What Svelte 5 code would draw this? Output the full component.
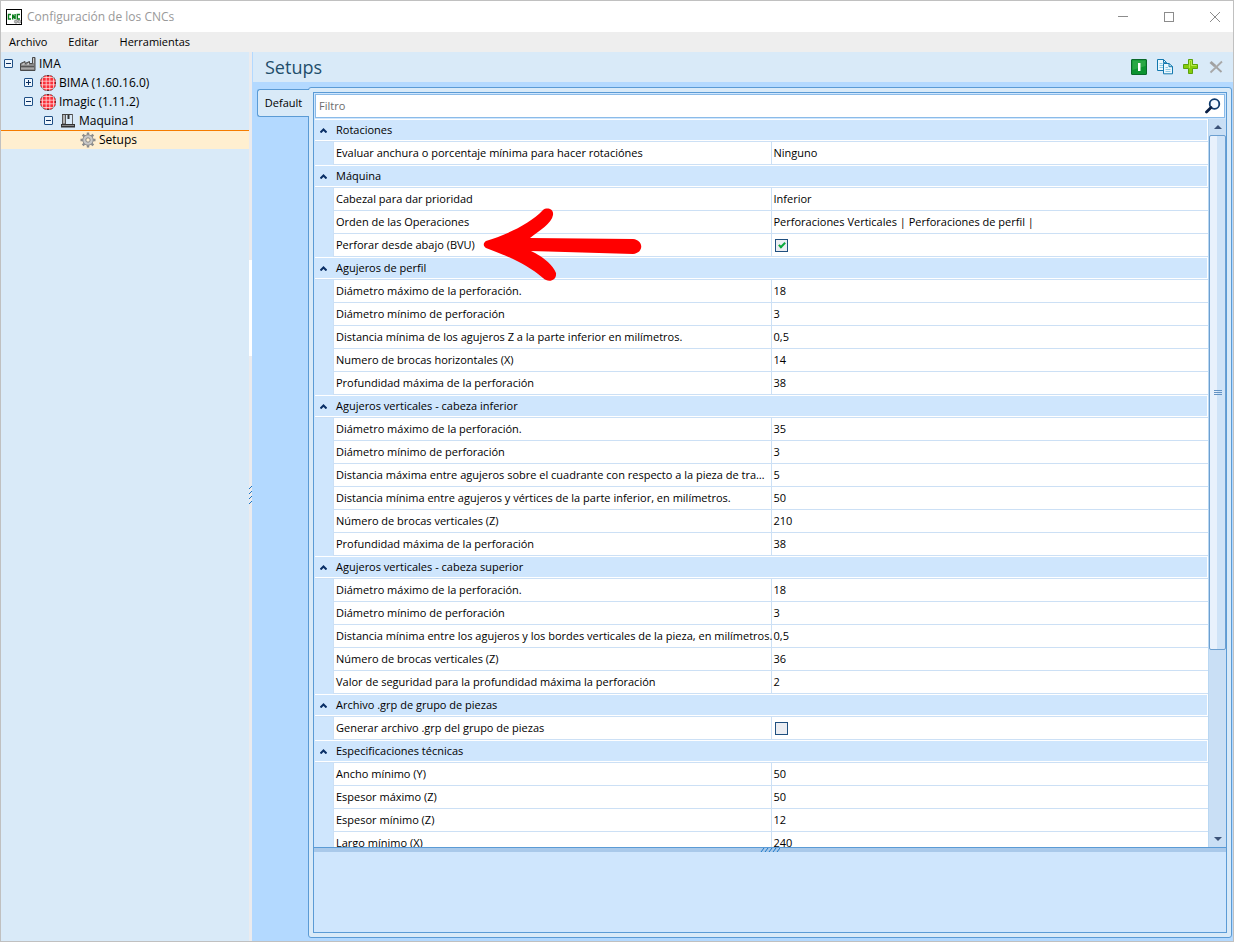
<script>
  const menus = ['Archivo', 'Editar', 'Herramientas'];

  const tree = [
    { label: 'IMA', level: 0, icon: 'factory', open: true },
    { label: 'BIMA (1.60.16.0)', level: 1, icon: 'ima', open: false },
    { label: 'Imagic (1.11.2)', level: 1, icon: 'ima', open: true },
    { label: 'Maquina1', level: 2, icon: 'machine', open: true },
    { label: 'Setups', level: 3, icon: 'gear' }
  ];

  let selected = 'Setups';
  let filter = '';

  let groups = [
    {
      name: 'Rotaciones',
      open: true,
      rows: [{ name: 'Evaluar anchura o porcentaje mínima para hacer rotaciónes', value: 'Ninguno' }]
    },
    {
      name: 'Máquina',
      open: true,
      rows: [
        { name: 'Cabezal para dar prioridad', value: 'Inferior' },
        { name: 'Orden de las Operaciones', value: 'Perforaciones Verticales | Perforaciones de perfil |' },
        { name: 'Perforar desde abajo (BVU)', value: true, marked: true }
      ]
    },
    {
      name: 'Agujeros de perfil',
      open: true,
      rows: [
        { name: 'Diámetro máximo de la perforación.', value: '18' },
        { name: 'Diámetro mínimo de perforación', value: '3' },
        { name: 'Distancia mínima de los agujeros Z a la parte inferior en milímetros.', value: '0,5' },
        { name: 'Numero de brocas horizontales (X)', value: '14' },
        { name: 'Profundidad máxima de la perforación', value: '38' }
      ]
    },
    {
      name: 'Agujeros verticales - cabeza inferior',
      open: true,
      rows: [
        { name: 'Diámetro máximo de la perforación.', value: '35' },
        { name: 'Diámetro mínimo de perforación', value: '3' },
        { name: 'Distancia máxima entre agujeros sobre el cuadrante con respecto a la pieza de trabaj...', value: '5' },
        { name: 'Distancia mínima entre agujeros y vértices de la parte inferior, en milímetros.', value: '50' },
        { name: 'Número de brocas verticales (Z)', value: '210' },
        { name: 'Profundidad máxima de la perforación', value: '38' }
      ]
    },
    {
      name: 'Agujeros verticales - cabeza superior',
      open: true,
      rows: [
        { name: 'Diámetro máximo de la perforación.', value: '18' },
        { name: 'Diámetro mínimo de perforación', value: '3' },
        { name: 'Distancia mínima entre los agujeros y los bordes verticales de la pieza, en milímetros.', value: '0,5' },
        { name: 'Número de brocas verticales (Z)', value: '36' },
        { name: 'Valor de seguridad para la profundidad máxima la perforación', value: '2' }
      ]
    },
    {
      name: 'Archivo .grp de grupo de piezas',
      open: true,
      rows: [{ name: 'Generar archivo .grp del grupo de piezas', value: false }]
    },
    {
      name: 'Especificaciones técnicas',
      open: true,
      rows: [
        { name: 'Ancho mínimo (Y)', value: '50' },
        { name: 'Espesor máximo (Z)', value: '50' },
        { name: 'Espesor mínimo (Z)', value: '12' },
        { name: 'Largo mínimo (X)', value: '240' }
      ]
    }
  ];

  $: visible = groups
    .map((group) => ({
      ...group,
      rows: group.rows.filter((row) => row.name.toLowerCase().includes(filter.toLowerCase()))
    }))
    .filter((group) => group.rows.length > 0);

  function toggle(name) {
    groups = groups.map((g) => (g.name === name ? { ...g, open: !g.open } : g));
  }
</script>

<div class="window">
  <header class="titlebar">
    <svg class="app-icon" width="16" height="16" viewBox="0 0 16 16">
      <rect x="0.5" y="0.5" width="15" height="15" fill="#fff" stroke="#000" />
      <g fill="none" stroke="#0a7d1c" stroke-width="1.4">
        <path d="M5 5.5H2.500v4.500H5" />
        <path d="M6.700 10.600V5.500l2.400 4.500V5" />
        <path d="M14 5.500h-2.700v4.500H14" />
      </g>
      <circle cx="10" cy="12.6" r="1.6" fill="#bbb" stroke="#888" stroke-width="0.8" />
      <circle cx="13.4" cy="12.6" r="1.4" fill="#ccc" stroke="#777" stroke-width="0.8" />
    </svg>
    <h1>Configuración de los CNCs</h1>
    <div class="window-buttons">
      <button type="button" aria-label="Minimizar">
        <svg width="10" height="10" viewBox="0 0 10 10"><path d="M0 4.5h10" /></svg>
      </button>
      <button type="button" aria-label="Maximizar">
        <svg width="10" height="10" viewBox="0 0 10 10"><rect x="0.5" y="0.5" width="9" height="9" /></svg>
      </button>
      <button type="button" aria-label="Cerrar">
        <svg width="10" height="10" viewBox="0 0 10 10"><path d="M0 0l10 10M10 0L0 10" /></svg>
      </button>
    </div>
  </header>

  <nav class="menubar">
    {#each menus as menu}
      <button type="button">{menu}</button>
    {/each}
  </nav>

  <div class="workspace">
    <aside class="sidebar">
      <ul class="tree">
        {#each tree as node}
          <li class="level-{node.level}" class:selected={selected === node.label}>
            {#if node.open !== undefined}
              <svg class="expander" width="9" height="9" viewBox="0 0 9 9">
                <rect x="0.5" y="0.5" width="8" height="8" rx="0.5" fill="#eef6fd" stroke="#1f4f85" />
                <path d={node.open ? 'M2 4.5h5' : 'M2 4.5h5M4.5 2v5'} stroke="#0b2f60" />
              </svg>
            {:else}
              <span class="expander"></span>
            {/if}
            <button type="button" on:click={() => (selected = node.label)}>
              <svg width="16" height="16" viewBox="0 0 16 16">
                {#if node.icon === 'factory'}
                  <path d="M0.5 14.5V7.5L5 5.5v2L9.500 5.500v2h3V1.500h2.500v13z" fill="#8a8a8a" stroke="#4a4a4a" />
                  <path d="M1.500 8.500L4.500 7v1.500zM6.500 8.500L9 7v1.500z" fill="#eee" />
                  <path d="M1 10.500h13" stroke="#555" />
                  <path d="M1 12.500h13" stroke="#a8a8a8" />
                  <path d="M13.500 2v5" stroke="#ccc" />
                {:else if node.icon === 'ima'}
                  <circle cx="8" cy="8" r="8" fill="#1c1c1c" />
                  <path d="M4 0.700h8v2.300h1v1h2.300v8H13v1h-1v2.300H4V13H3v-1H0.700V4H3V3h1z" fill="#f9303a" />
                  <path
                    d="M2.500 2.500v11M6.200 0.200v15.600M9.800 0.200v15.600M13.500 2.500v11M2.500 2.500h11M0.200 6.200h15.600M0.200 9.800h15.600M2.500 13.500h11"
                    stroke="#ffdcdc"
                    stroke-width="0.800"
                  />
                {:else if node.icon === 'machine'}
                  <path d="M2.500 1.500h3v9.500h-3z" fill="#b5b5b5" stroke="#555" />
                  <path d="M2 1.500h11" stroke="#444" />
                  <path d="M8.500 2v4" stroke="#333" stroke-width="2" />
                  <path d="M12.500 1v10" stroke="#666" />
                  <rect x="1" y="11" width="14" height="3.500" fill="#333" />
                  <path d="M2 12.500h12" stroke="#888" />
                {:else}
                  <path d="M8 0.500v15M0.500 8h15M2.700 2.700l10.600 10.600M13.300 2.700L2.700 13.300" stroke="#8b8b8b" stroke-width="2.400" />
                  <circle cx="8" cy="8" r="5.200" fill="#c9c9c9" stroke="#929292" />
                  <circle cx="8" cy="8" r="2.200" fill="#fff0d2" stroke="#888" />
                {/if}
              </svg>
              <span>{node.label}</span>
            </button>
          </li>
        {/each}
      </ul>
    </aside>

    <div class="splitter">
      <svg width="3" height="21" viewBox="0 0 3 21">
        <path d="M0 3l3-3M0 8l3-3M0 13l3-3M0 18l3-3" stroke="#1a78c8" />
      </svg>
    </div>

    <main class="main">
      <div class="heading">
        <h2>Setups</h2>
        <div class="tools">
          <button type="button" aria-label="Activar">
            <svg width="16" height="16" viewBox="0 0 16 16">
              <rect x="0.5" y="0.5" width="15" height="15" rx="0.5" fill="#0c9430" stroke="#0a6a2a" />
              <path d="M1.500 1.500h13v5.500L1.500 11z" fill="#2aa845" />
              <rect x="7" y="4" width="2.500" height="8" fill="#fff" />
            </svg>
          </button>
          <button type="button" aria-label="Copiar">
            <svg width="16" height="16" viewBox="0 0 16 16">
              <path d="M0.500 0.500h6l3 3v8h-9z" fill="#eaf7fd" stroke="#1378ae" />
              <path d="M6.500 0.500v3.200h3" fill="none" stroke="#1378ae" />
              <path d="M2.500 4.500h3M2.500 6.500h4M2.500 8.500h4" stroke="#8cc9e4" />
              <path d="M6.500 4.500h5.500l3.500 3v7.300h-9z" fill="#eaf7fd" stroke="#1378ae" />
              <path d="M12 4.500v3.200h3.500" fill="none" stroke="#1378ae" />
              <path d="M8.500 8.500h2.500M8.500 10.500h5M8.500 12.500h5" stroke="#8cc9e4" />
            </svg>
          </button>
          <button type="button" aria-label="Añadir">
            <svg width="16" height="16" viewBox="0 0 16 16">
              <path d="M5.500 0.500h4v5h5v4h-5v5h-4v-5h-5v-4h5z" fill="#86cc0c" stroke="#5ba30c" />
              <path d="M6.500 9V1.500h2v5h5" fill="none" stroke="#b9ea4c" />
            </svg>
          </button>
          <button type="button" aria-label="Eliminar" disabled>
            <svg width="16" height="16" viewBox="0 0 16 16">
              <path d="M1.500 3l4.500 4" stroke="#a0a0a0" stroke-width="3" />
              <path d="M5 6l7.500 7" stroke="#a2a2a2" stroke-width="1.800" />
              <path d="M13 2.500L1.500 13.500" stroke="#a8a8a8" stroke-width="1.800" />
            </svg>
          </button>
        </div>
      </div>

      <div class="content">
        <div class="tabs" role="tablist">
          <button type="button" class="tab" role="tab" aria-selected="true">Default</button>
        </div>

        <div class="frame">
          <section class="properties">
            <label class="filter">
              <input type="text" placeholder="Filtro" aria-label="Filtro" bind:value={filter} />
              <svg width="16" height="16" viewBox="0 0 16 16">
                <circle cx="9.500" cy="6" r="4.800" fill="#f2f8ff" stroke="#0d3a6e" stroke-width="1.800" />
                <path d="M6 9.500L1.500 14" stroke="#0a1f44" stroke-width="2.800" stroke-linecap="round" />
              </svg>
            </label>

            <div class="grid">
              <div class="rows">
                <table>
                  <colgroup>
                    <col class="gutter-col" />
                    <col />
                    <col />
                  </colgroup>
                  {#each visible as group}
                    <tbody>
                      <tr class="group">
                        <th colspan="3">
                          <button type="button" aria-expanded={group.open} on:click={() => toggle(group.name)}>
                            <svg width="7" height="5" viewBox="0 0 7 5">
                              <path d={group.open ? 'M0.500 4.500L3.500 1.500L6.500 4.500' : 'M0.500 0.500L3.500 3.500L6.500 0.500'} />
                            </svg>
                            {group.name}
                          </button>
                        </th>
                      </tr>
                      {#if group.open}
                        {#each group.rows as row}
                          <tr>
                            <td class="gutter"></td>
                            <td class="name" class:long={row.name.endsWith('...')}>
                              {row.name}
                              {#if row.marked}
                                <svg class="arrow" width="160" height="76" viewBox="0 0 160 76">
                                  <path
                                    d="M3 34C20 29 46 18 60 3C64 0 71 2 70 8C69 16 56 24 47 31L150 32C161 33 161 46 150 47L48 44C58 49 69 56 73 66C74 74 65 76 60 71C42 56 24 49 3 41C0 39 0 36 3 34Z"
                                  />
                                </svg>
                              {/if}
                            </td>
                            <td class="value">
                              {#if typeof row.value === 'boolean'}
                                <input type="checkbox" checked={row.value} aria-label={row.name} />
                              {:else}
                                {row.value}
                              {/if}
                            </td>
                          </tr>
                        {/each}
                      {/if}
                    </tbody>
                  {/each}
                </table>
              </div>

              <div class="scrollbar">
                <button type="button" aria-label="Subir">
                  <svg width="8" height="4" viewBox="0 0 8 4"><path d="M0 4l4-4l4 4z" /></svg>
                </button>
                <div class="track">
                  <div class="thumb"><span></span></div>
                </div>
                <button type="button" aria-label="Bajar">
                  <svg width="8" height="4" viewBox="0 0 8 4"><path d="M0 0h8L4 4z" /></svg>
                </button>
              </div>
            </div>

            <div class="divider">
              <svg width="20" height="4" viewBox="0 0 20 4">
                <path d="M1 4l3-4M5 4l3-4M9 4l3-4M13 4l3-4M17 4l3-4" stroke="#1a78c8" />
              </svg>
            </div>
            <div class="description"></div>
          </section>
        </div>
      </div>
    </main>
  </div>
</div>

<style>
  :global(body) {
    margin: 0;
  }

  .window {
    box-sizing: border-box;
    display: flex;
    flex-direction: column;
    height: 100vh;
    border: 1px solid #c0c0c0;
    background: #fff;
    color: #000;
    font-family: 'Open Sans', 'Noto Sans', sans-serif;
    font-size: 11px;
    overflow: hidden;
  }

  button {
    padding: 0;
    border: none;
    background: transparent;
    color: inherit;
    font: inherit;
  }

  svg {
    display: block;
    flex: none;
  }

  .titlebar {
    display: flex;
    align-items: center;
    height: 31px;
    padding-left: 5px;
  }

  h1 {
    flex: 1;
    margin: 0 0 0 5px;
    color: #999;
    font-size: 12px;
    font-weight: 400;
  }

  .window-buttons {
    display: flex;
    gap: 10px;
  }

  .window-buttons button {
    display: flex;
    align-items: center;
    justify-content: center;
    width: 36px;
    height: 30px;
  }

  .window-buttons svg {
    fill: none;
    stroke: #8c8c8c;
  }

  .menubar {
    display: flex;
    gap: 21px;
    height: 20px;
    padding-left: 8px;
    background: #eee;
  }

  .menubar button {
    height: 20px;
    line-height: 20px;
  }

  .workspace {
    display: flex;
    flex: 1;
    min-height: 0;
  }

  .sidebar {
    flex: none;
    width: 248px;
    background: #d9eaf8;
  }

  .tree {
    margin: 0;
    padding: 2px 0 0;
    list-style: none;
    font-size: 12px;
  }

  .tree li {
    box-sizing: border-box;
    display: flex;
    align-items: center;
    gap: 7px;
    height: 19px;
    padding-left: 3px;
  }

  .tree .level-1 {
    padding-left: 23px;
  }

  .tree .level-2 {
    padding-left: 43px;
  }

  .tree .level-3 {
    padding-left: 63px;
  }

  .tree .selected {
    border-top: 1px solid #f57c00;
    background: #ffefd0;
  }

  .expander {
    width: 9px;
  }

  .tree button {
    display: flex;
    align-items: center;
    gap: 3px;
    height: 18px;
    line-height: 16px;
  }

  .splitter {
    display: flex;
    flex: none;
    align-items: center;
    width: 3px;
    background: linear-gradient(#ebebee 208px, #fff 208px 304px, #ebebee 304px);
  }

  .main {
    display: flex;
    flex: 1;
    flex-direction: column;
    min-width: 0;
    background: #b3d9ff;
  }

  .heading {
    display: flex;
    align-items: center;
    justify-content: space-between;
    height: 30px;
    margin-left: 1px;
    padding: 0 8px 0 12px;
    background: #d9eaf8;
  }

  h2 {
    margin: 0;
    color: #1f4e6b;
    font-size: 18px;
    font-weight: 400;
  }

  .tools {
    display: flex;
    gap: 10px;
  }

  .content {
    display: flex;
    flex: 1;
    min-height: 0;
    padding: 5px 1px 3px 5px;
  }

  .tabs {
    z-index: 1;
    width: 52px;
    margin-right: -1px;
    padding-top: 2px;
  }

  .tab {
    width: 100%;
    height: 28px;
    padding-bottom: 2px;
    border: 1px solid #5b9bd5;
    border-right: none;
    border-radius: 3px 0 0 3px;
    background: #d9eaf8;
  }

  .frame {
    box-sizing: border-box;
    display: flex;
    flex: 1;
    min-width: 0;
    padding: 4px;
    border: 1px solid #5b9bd5;
    border-radius: 3px;
    background: #d9eaf8;
  }

  .properties {
    display: flex;
    flex: 1;
    flex-direction: column;
    min-width: 0;
    border: 1px solid #5b9bd5;
    background: #cfe6fd;
  }

  .filter {
    display: flex;
    align-items: center;
    height: 22px;
    margin: 1px;
    padding-right: 3px;
    border: 1px solid #8bbbe8;
    background: #fff;
  }

  .filter input {
    flex: 1;
    min-width: 0;
    padding: 0 3px 2px;
    border: none;
    outline: none;
    background: transparent;
    font: inherit;
  }

  .filter input::placeholder {
    color: #6d6d6d;
  }

  .grid {
    display: flex;
    flex: 1;
    min-height: 0;
    padding-left: 1px;
  }

  .rows {
    flex: 1;
    min-width: 0;
    overflow: hidden;
    background: #fff;
  }

  table {
    width: 100%;
    border-collapse: separate;
    border-spacing: 0;
    table-layout: fixed;
  }

  .gutter-col {
    width: 18px;
  }

  th,
  td {
    box-sizing: border-box;
    height: 23px;
    padding: 0 0 0 2px;
    border-bottom: 1px solid #cce0f5;
    font-weight: 400;
    line-height: 22px;
    text-align: left;
    white-space: nowrap;
  }

  th {
    padding: 1px 1px 1px 0;
  }

  th button {
    display: flex;
    align-items: center;
    gap: 9px;
    width: 100%;
    height: 20px;
    padding-left: 5px;
    background: #cfe6fd;
  }

  th svg {
    fill: none;
    stroke: #0a2f66;
    stroke-width: 2;
  }

  .gutter {
    border-color: #cfe6fd;
    background: #cfe6fd;
  }

  .name {
    position: relative;
    border-left: 1px solid #cce0f5;
  }

  .long {
    overflow: hidden;
    text-overflow: ellipsis;
  }

  .value {
    border-left: 1px solid #cce0f5;
  }

  .arrow {
    position: absolute;
    top: -27px;
    left: 149px;
    z-index: 1;
    fill: #f00;
  }

  input[type='checkbox'] {
    display: block;
    box-sizing: border-box;
    width: 13px;
    height: 13px;
    margin: 0 0 0 1px;
    border: 1px solid #1f4f7f;
    background: #ebedf2;
    appearance: none;
  }

  input[type='checkbox']:checked::after {
    display: block;
    width: 2px;
    height: 5px;
    margin: 1px 0 0 4px;
    border: solid #0aa83c;
    border-width: 0 2px 2px 0;
    content: '';
    transform: rotate(45deg);
  }

  .scrollbar {
    box-sizing: border-box;
    display: flex;
    flex: none;
    flex-direction: column;
    width: 18px;
    border-left: 1px solid #b9d7f2;
    background: #c9dff5;
  }

  .scrollbar button {
    display: flex;
    align-items: center;
    justify-content: center;
    height: 16px;
  }

  .scrollbar path {
    fill: #3c5378;
  }

  .track {
    flex: 1;
    min-height: 0;
  }

  .thumb {
    box-sizing: border-box;
    display: flex;
    align-items: center;
    justify-content: center;
    width: 17px;
    height: 74%;
    border: 1px solid #6c9fd0;
    border-radius: 2px;
    background: linear-gradient(to right, #e8f1fc 45%, #cfe3f7 45%);
  }

  .thumb span {
    width: 8px;
    height: 5px;
    background: repeating-linear-gradient(#6493c4 0 1px, transparent 1px 2px);
  }

  .divider {
    display: flex;
    justify-content: center;
    height: 4px;
    border-top: 1px solid #5b9bd5;
    background: #a9c9ea;
  }

  .description {
    height: 80px;
  }
</style>
